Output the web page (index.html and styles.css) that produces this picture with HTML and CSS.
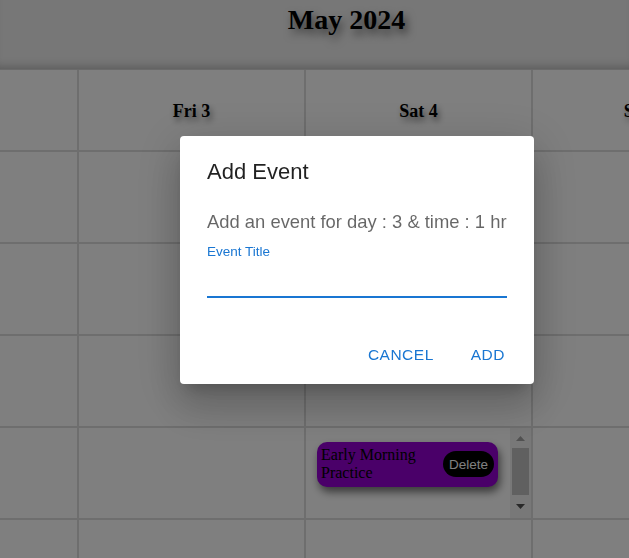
FILE: index.html
```html
<!DOCTYPE html>
<html lang="en">
<head>
<meta charset="utf-8">
<title>Calendar</title>
<link rel="stylesheet" href="styles.css">
</head>
<body>
<header class="header">
  <h1 class="month">May 2024</h1>
</header>
<main class="calendar">
  <div class="day-head">Thu 2</div>
  <div class="day-head">Fri 3</div>
  <div class="day-head">Sat 4</div>
  <div class="day-head">Sun 5</div>

  <div class="cell"></div><div class="cell"></div><div class="cell"></div><div class="cell"></div>
  <div class="cell"></div><div class="cell"></div><div class="cell"></div><div class="cell"></div>
  <div class="cell"></div><div class="cell"></div><div class="cell"></div><div class="cell"></div>
  <div class="cell"></div><div class="cell"></div>
  <div class="cell cell-scroll">
    <div class="cell-inner">
      <div class="event">
        <span class="event-title">Early Morning Practice</span>
        <button class="delete-btn" type="button">Delete</button>
      </div>
    </div>
    <div class="scrollbar" aria-hidden="true">
      <div class="sb-btn">
        <svg width="21" height="17" viewBox="0 0 21 17"><path d="M6 13h9l-4.5-5z" fill="#a3a3a3"/></svg>
      </div>
      <div class="sb-track"><div class="sb-thumb"></div></div>
      <div class="sb-btn">
        <svg width="21" height="17" viewBox="0 0 21 17"><path d="M6 3h9l-4.5 5z" fill="#505050"/></svg>
      </div>
    </div>
  </div>
  <div class="cell"></div>
  <div class="cell"></div><div class="cell"></div><div class="cell"></div><div class="cell"></div>
</main>

<div class="backdrop">
  <div class="dialog" role="dialog">
    <h2 class="dialog-title">Add Event</h2>
    <p class="dialog-text">Add an event for day : 3 &amp; time : 1 hr</p>
    <label class="field-label" for="title">Event Title</label>
    <input class="field-input" id="title" type="text">
    <div class="dialog-actions">
      <button class="text-btn" type="button">Cancel</button>
      <button class="text-btn" type="button">Add</button>
    </div>
  </div>
</div>
</body>
</html>
```

FILE: styles.css
```css
html, body {
  margin: 0;
  padding: 0;
  background: #ffffff;
  overflow: hidden;
  font-family: "Liberation Serif", "Times New Roman", serif;
}

.header {
  height: 70px;
  box-sizing: border-box;
  padding: 4px 0 0 64px;
  background: #eeeeee;
  text-align: center;
  box-shadow: inset 0 -9px 10px -7px rgba(0, 0, 0, 0.25);
  border-bottom: 1px solid #d4d4d4;
}

.month {
  margin: 0;
  font-size: 28px;
  line-height: 32px;
  font-weight: bold;
  color: #000;
  text-shadow: 3px 5px 8px rgba(0, 0, 0, 0.55);
}

.calendar {
  display: grid;
  grid-template-columns: repeat(4, 227px);
  grid-template-rows: 82px;
  grid-auto-rows: 92px;
  margin-left: -148px;
}

.day-head,
.cell {
  box-sizing: border-box;
  border-right: 2px solid #dcdcdc;
  border-bottom: 2px solid #dcdcdc;
  background: #ffffff;
}

.day-head {
  display: flex;
  align-items: center;
  justify-content: center;
  padding-top: 3px;
  font-size: 18px;
  font-weight: bold;
  color: #000;
  text-shadow: 2px 4px 6px rgba(0, 0, 0, 0.5);
}

.cell-scroll {
  display: flex;
  overflow: hidden;
}

.cell-inner {
  flex: 1;
  padding: 14px 0 0 11px;
}

.event {
  width: 181px;
  box-sizing: border-box;
  display: flex;
  align-items: center;
  gap: 4px;
  padding: 4px 4px 5px 4px;
  background: #9400d3;
  border-radius: 10px;
  box-shadow: 2px 5px 9px rgba(0, 0, 0, 0.55);
}

.event-title {
  flex: 1;
  font-size: 16px;
  line-height: 18px;
  color: #000;
}

.delete-btn {
  border: none;
  margin: 0;
  padding: 0 6px;
  height: 26px;
  border-radius: 13px;
  background: #000;
  color: #fff;
  font-family: "Liberation Sans", Arial, sans-serif;
  font-size: 13.5px;
}

.scrollbar {
  width: 21px;
  display: flex;
  flex-direction: column;
  background: #f1f1f1;
}

.sb-btn {
  height: 17px;
  flex: none;
}

.sb-btn svg {
  display: block;
}

.sb-track {
  flex: 1;
  padding: 3px 2px 3px;
  display: flex;
  flex-direction: column;
}

.sb-thumb {
  height: 47px;
  background: #c1c1c1;
}

.backdrop {
  position: fixed;
  inset: 0;
  background: rgba(0, 0, 0, 0.5);
  display: flex;
  align-items: flex-start;
  padding: 136px 0 0 180px;
}

.dialog {
  width: 354px;
  height: 248px;
  box-sizing: border-box;
  padding: 0 27px;
  display: flex;
  flex-direction: column;
  background: #ffffff;
  border-radius: 4px;
  box-shadow: 0 11px 15px -7px rgba(0, 0, 0, 0.2),
              0 24px 38px 3px rgba(0, 0, 0, 0.14),
              0 9px 46px 8px rgba(0, 0, 0, 0.12);
  font-family: "Liberation Sans", Arial, sans-serif;
}

.dialog-title {
  margin: 20px 0 0;
  font-size: 22px;
  line-height: 32px;
  font-weight: normal;
  color: rgba(0, 0, 0, 0.87);
}

.dialog-text {
  margin: 22px 0 0;
  font-size: 18.4px;
  line-height: 24px;
  color: rgba(0, 0, 0, 0.6);
  white-space: nowrap;
}

.field-label {
  margin-top: 10px;
  font-size: 13.5px;
  line-height: 16px;
  color: #1976d2;
}

.field-input {
  display: block;
  width: 100%;
  height: 38px;
  box-sizing: border-box;
  margin: 0;
  padding: 0;
  border: none;
  border-bottom: 2px solid #1976d2;
  outline: none;
  background: transparent;
  font-family: inherit;
  font-size: 16px;
}

.dialog-actions {
  display: flex;
  justify-content: flex-end;
  gap: 32px;
  margin-top: 41px;
}

.text-btn {
  border: none;
  background: transparent;
  margin: 0;
  padding: 6px 2px 6px 3px;
  font-family: "Liberation Sans", Arial, sans-serif;
  font-size: 15.5px;
  line-height: 20px;
  letter-spacing: 0.5px;
  text-transform: uppercase;
  color: #1976d2;
}
```
